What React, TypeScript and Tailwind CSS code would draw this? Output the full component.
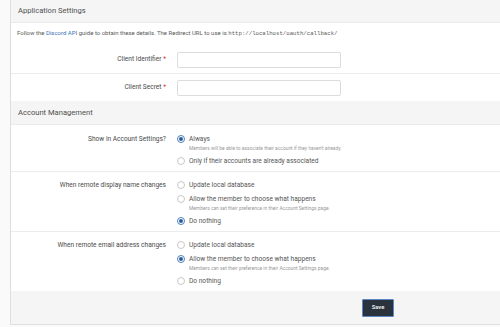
import React from 'react';

type Option = { label: string; hint?: string; checked?: boolean };

const Radio: React.FC<{ checked?: boolean }> = ({ checked }) => (
    <span
        className={`mt-[3px] flex h-[8px] w-[8px] shrink-0 items-center justify-center rounded-full border bg-white ${
            checked ? 'border-[#4f7fbd]' : 'border-[#c8c8c8]'
        }`}
    >
        {checked && <span className="h-[4px] w-[4px] rounded-full bg-[#2d5fa3]" />}
    </span>
);

const RadioGroup: React.FC<{ options: Option[] }> = ({ options }) => (
    <div className="flex flex-col">
        {options.map((o) => (
            <div key={o.label} className="flex gap-[4px]">
                <Radio checked={o.checked} />
                <div className="flex flex-col">
                    <span className="text-[6.6px] leading-[14px] text-[#555]">{o.label}</span>
                    {o.hint && (
                        <span className="-mt-[2px] mb-[2px] text-[4.9px] leading-[8px] text-[#999]">{o.hint}</span>
                    )}
                </div>
            </div>
        ))}
    </div>
);

const Row: React.FC<{ label: React.ReactNode; pad: string; last?: boolean; children: React.ReactNode }> = ({
    label,
    pad,
    last,
    children,
}) => (
    <div className={`flex gap-[11px] ${pad} ${last ? '' : 'border-b border-[#ededed]'}`}>
        <div className="w-[155px] shrink-0 text-right text-[6.6px] leading-[14px] text-[#4a4a4a]">{label}</div>
        <div className="flex-1">{children}</div>
    </div>
);

const Header: React.FC<{ title: string; h: string }> = ({ title, h }) => (
    <div className={`flex ${h} items-center border-b border-[#ebebeb] bg-[#f5f5f5] px-[7px] text-[7.6px] text-[#505050]`}>
        {title}
    </div>
);

const Required = () => <span className="text-[#d9342b]"> *</span>;

export default function App() {
    const hint = 'Members can set their preference in their Account Settings page.';

    return (
        <div
            className="h-[327px] w-[500px] overflow-hidden bg-[#fafafa] pl-[10px]"
            style={{ fontFamily: 'Roboto, "Liberation Sans", sans-serif' }}
        >
            <div className="w-[520px] border border-t-0 border-[#dedede] bg-white">
                <Header title="Application Settings" h="h-[23px]" />

                <div className="px-[6px] pb-[7px] pt-[6px] text-[6px] leading-[8px] text-[#5a5a5a]">
                    Follow the <span className="text-[#3b74b8]">Discord API</span> guide to obtain these details. The Redirect URL to use is{' '}
                    <span className="font-['Liberation_Mono',monospace] text-[5.7px]">http://localhost/oauth/callback/</span>
                </div>

                <div className="flex items-center gap-[11px] border-b border-[#ededed] pb-[5px] pt-[7px]">
                    <div className="w-[155px] shrink-0 text-right text-[6.6px] text-[#4a4a4a]">
                        Client Identifier<Required />
                    </div>
                    <div className="h-[16px] w-[164px] rounded-[2px] border border-[#dcdcdc] bg-white" />
                </div>
                <div className="flex items-center gap-[11px] pb-[5px] pt-[6px]">
                    <div className="w-[155px] shrink-0 text-right text-[6.6px] text-[#4a4a4a]">
                        Client Secret<Required />
                    </div>
                    <div className="h-[16px] w-[164px] rounded-[2px] border border-[#dcdcdc] bg-white" />
                </div>

                <Header title="Account Management" h="h-[24px]" />

                <Row label="Show in Account Settings?" pad="pt-[7px] pb-[3px]">
                    <RadioGroup
                        options={[
                            { label: 'Always', hint: "Members will be able to associate their account if they haven't already.", checked: true },
                            { label: 'Only if their accounts are already associated' },
                        ]}
                    />
                </Row>

                <Row label="When remote display name changes" pad="pt-[6px] pb-[3px]">
                    <RadioGroup
                        options={[
                            { label: 'Update local database' },
                            { label: 'Allow the member to choose what happens', hint },
                            { label: 'Do nothing', checked: true },
                        ]}
                    />
                </Row>

                <Row label="When remote email address changes" pad="pt-[6px] pb-[3px]" last>
                    <RadioGroup
                        options={[
                            { label: 'Update local database' },
                            { label: 'Allow the member to choose what happens', hint, checked: true },
                            { label: 'Do nothing' },
                        ]}
                    />
                </Row>

                <div className="flex h-[33px] items-center bg-[#f5f5f5] pl-[351px]">
                    <button className="h-[18px] w-[32px] rounded-[1px] border border-[#5b86c8] bg-[#29323d] text-[5.8px] font-bold text-[#e8e8e8]">
                        Save
                    </button>
                </div>
            </div>
        </div>
    );
}
